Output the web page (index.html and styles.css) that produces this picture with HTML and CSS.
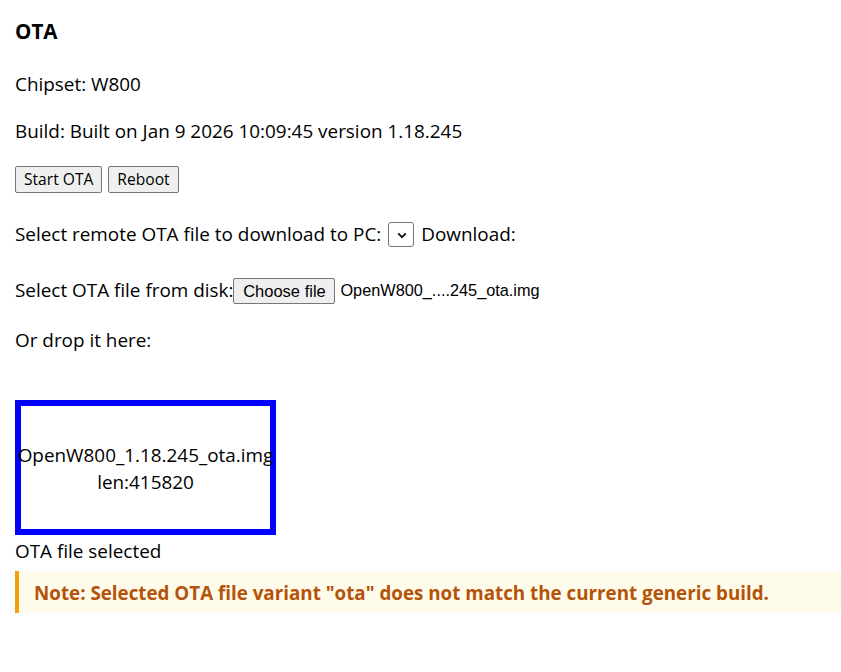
FILE: index.html
```html
<!DOCTYPE html>
<html>
<head>
<meta charset="utf-8">
<link rel="stylesheet" href="styles.css">
</head>
<body>
<h4 class="title">OTA</h4>
<p class="line line-chipset">Chipset: W800</p>
<p class="line line-build">Build: Built on Jan 9 2026 10:09:45 version 1.18.245</p>
<div class="actions">
  <button class="btn">Start OTA</button>
  <button class="btn">Reboot</button>
</div>
<div class="row row-remote">
  <span>Select remote OTA file to download to PC:</span>
  <span class="select"><svg width="10" height="7" viewBox="0 0 10 7"><path d="M1.2 1.3 L5 5.1 L8.8 1.3" fill="none" stroke="#111" stroke-width="1.9"/></svg></span>
  <span>Download:</span>
</div>
<div class="row row-file">
  <span>Select OTA file from disk:</span><span class="file-btn">Choose file</span><span class="file-name">OpenW800_....245_ota.img</span>
</div>
<p class="line line-drop">Or drop it here:</p>
<div class="dropzone">
  <div>OpenW800_1.18.245_ota.img</div>
  <div>len:415820</div>
</div>
<p class="line line-status">OTA file selected</p>
<div class="note">Note: Selected OTA file variant "ota" does not match the current generic build.</div>
</body>
</html>
```
FILE: styles.css
```css
html, body {
  margin: 0;
  padding: 0;
  background: #ffffff;
}
body {
  padding: 0 15px;
  font-family: "Open Sans", sans-serif;
  font-size: 18.9px;
  line-height: 27px;
  color: #000;
}
.title {
  margin: 18px 0 0;
  font-size: 20.6px;
  font-weight: 700;
  line-height: 27px;
}
.line {
  margin: 0;
  white-space: nowrap;
}
.line-chipset { margin-top: 26px; }
.line-build { margin-top: 20px; }
.actions {
  margin-top: 20.5px;
  display: flex;
  gap: 6px;
}
.btn {
  font-family: "Open Sans", sans-serif;
  font-size: 15.6px;
  line-height: 25px;
  height: 27px;
  padding: 0 8px;
  margin: 0;
  background: #efefef;
  border: 1px solid #767676;
  border-radius: 2px;
  color: #000;
}
.row {
  display: flex;
  align-items: center;
  height: 27px;
  white-space: nowrap;
}
.row-remote { margin-top: 28.5px; }
.select {
  width: 26px;
  height: 25px;
  box-sizing: border-box;
  border: 1px solid #767676;
  border-radius: 3px;
  margin: 0 7px 0 7px;
  display: flex;
  align-items: center;
  justify-content: center;
  padding-left: 2px;
  padding-top: 1px;
}
.row-file { margin-top: 29px; }
.file-btn {
  box-sizing: border-box;
  height: 26px;
  width: 102px;
  display: flex;
  align-items: center;
  justify-content: center;
  font-family: "Liberation Sans", Arial, sans-serif;
  font-size: 16.5px;
  background: #efefef;
  border: 1px solid #767676;
  border-radius: 2px;
  margin-top: 1px;
}
.file-name {
  font-family: "Liberation Sans", Arial, sans-serif;
  font-size: 16.3px;
  margin-left: 5px;
}
.line-drop { margin-top: 23px; }
.dropzone {
  margin-top: 45.5px;
  box-sizing: border-box;
  width: 261px;
  height: 135px;
  border: 6px solid #0000ff;
  display: flex;
  flex-direction: column;
  align-items: center;
  justify-content: center;
  padding-top: 3px;
  white-space: nowrap;
  text-align: center;
}
.line-status { margin-top: 3px; }
.note {
  margin: 6px -15px 0 0;
  box-sizing: border-box;
  height: 42px;
  padding: 9px 15px 6px;
  background: #fffbeb;
  border-left: 4px solid #f59e0b;
  color: #b45309;
  font-weight: 700;
  font-size: 18.8px;
  line-height: 27px;
  white-space: nowrap;
}
```
